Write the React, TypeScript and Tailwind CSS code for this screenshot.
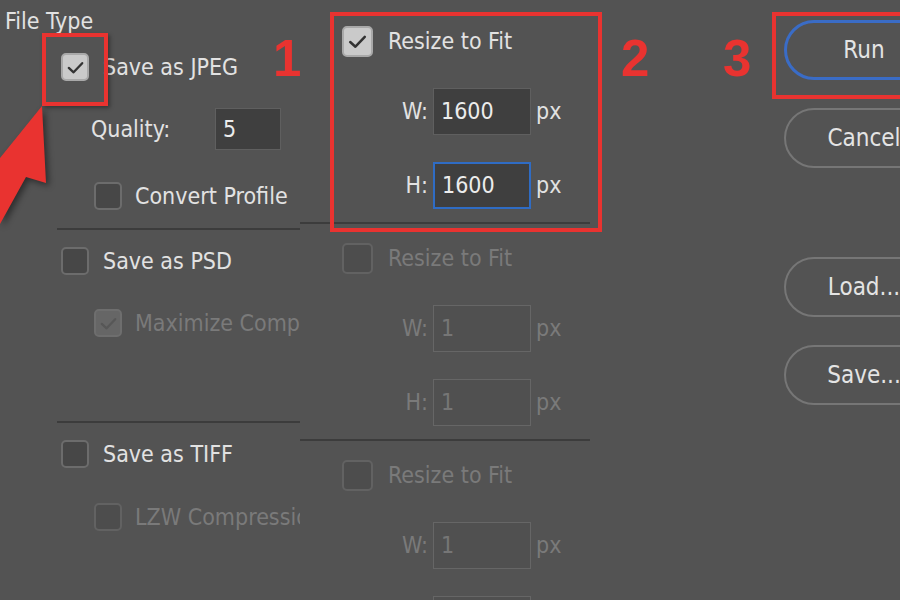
import React from 'react';

// Photoshop "Image Processor" dialog, zoomed, with red tutorial marks on top

const on = 'text-[#e2e2e2]';
const off = 'text-[#7a7a7a]';

const Box: React.FC<{ checked?: boolean; disabled?: boolean; big?: boolean }> = ({ checked, disabled, big }) => {
    const size = big ? 'w-[31px] h-[31px]' : 'w-[28px] h-[28px]';
    let look = 'bg-[#474747] border-[#6c6c6c]';
    if (checked && !disabled) look = 'bg-[#cacaca] border-[#a9a9a9]';
    if (checked && disabled) look = 'bg-[#666666] border-[#6e6e6e]';
    if (!checked && disabled) look = 'bg-[#4d4d4d] border-[#626262]';
    return (
        <div className={`${size} ${look} shrink-0 rounded-[5px] border-2 flex items-center justify-center`}>
            {checked && (
                <svg viewBox="0 0 24 24" className={big ? 'w-[25px] h-[25px]' : 'w-[23px] h-[23px]'}>
                    <polyline points="5,12.5 10,17 19,7.5" fill="none" stroke={disabled ? '#575757' : '#333333'} strokeWidth="2.4" strokeLinecap="round" strokeLinejoin="round" />
                </svg>
            )}
        </div>
    );
};

const Dim: React.FC<{ label: string; value: string; active: boolean; focus?: boolean; gap: string }> = ({ label, value, active, focus, gap }) => (
    <div className={`${gap} h-[47px] flex items-center`}>
        <span className={`w-[128px] text-right ${active ? on : off}`}>{label}</span>
        <div
            className={`ml-[5px] w-[98px] h-[47px] shrink-0 pl-[7px] flex items-center ${
                active ? 'bg-[#3f3f3f] text-[#ececec]' : 'bg-[#505050] text-[#767676]'
            } ${focus ? 'border-2 border-[#2f6cc4]' : active ? 'border border-[#5f5f5f]' : 'border border-[#666666]'}`}
        >
            {value}
        </div>
        <span className={`ml-[5px] ${active ? on : off}`}>px</span>
    </div>
);

const ResizeGroup: React.FC<{ active: boolean; w: string; h: string; focusH?: boolean }> = ({ active, w, h, focusH }) => (
    <div className="flex flex-col">
        <div className="mt-[9px] h-[50px] flex items-center pl-[42px] gap-[15px]">
            <Box checked={active} disabled={!active} big />
            <span className={active ? on : off}>Resize to Fit</span>
        </div>
        <Dim gap="mt-[22px]" label="W:" value={w} active={active} />
        <Dim gap="mt-[27px]" label="H:" value={h} active={active} focus={focusH} />
        <div className="mt-[13px] h-[2px] w-[290px] bg-[#3c3c3c]" />
    </div>
);

const Pill: React.FC<{ label: string; blue?: boolean; gap: string }> = ({ label, blue, gap }) => (
    <div
        className={`${gap} w-[160px] h-[60px] shrink-0 rounded-full flex items-center justify-center text-[24px] text-[#e4e4e4] ${
            blue ? 'border-[3px] border-[#3a6cc6]' : 'border-2 border-[#767676]'
        }`}
    >
        {label}
    </div>
);

export default function App() {
    return (
        <div className="relative w-[900px] h-[600px] overflow-hidden bg-[#535353] flex font-['DejaVu_Sans_Condensed','DejaVu_Sans',sans-serif] text-[23px] whitespace-nowrap">
            {/* left column: file types */}
            <div className="w-[300px] shrink-0 overflow-hidden flex flex-col">
                <div className={`h-[42px] flex items-center pl-[5px] ${on}`}>File Type</div>
                <div className="h-[50px] flex items-center pl-[61px] gap-[14px]">
                    <Box checked />
                    <span className={on}>Save as JPEG</span>
                </div>
                <div className="h-[74px] flex items-center pl-[91px]">
                    <span className={`w-[124px] ${on}`}>Quality:</span>
                    <div className="w-[66px] h-[42px] shrink-0 bg-[#3f3f3f] border border-[#5f5f5f] pl-[7px] flex items-center text-[#ececec]">5</div>
                </div>
                <div className="h-[60px] flex items-center pl-[94px] gap-[13px]">
                    <Box />
                    <span className={on}>Convert Profile</span>
                </div>
                <div className="mt-[2px] ml-[57px] h-[2px] bg-[#3c3c3c]" />
                <div className="h-[62px] flex items-center pl-[61px] gap-[14px]">
                    <Box />
                    <span className={on}>Save as PSD</span>
                </div>
                <div className="h-[62px] flex items-center pl-[94px] gap-[13px]">
                    <Box checked disabled />
                    <span className={off}>Maximize Compatibility</span>
                </div>
                <div className="mt-[67px] ml-[57px] h-[2px] bg-[#3c3c3c]" />
                <div className="h-[62px] flex items-center pl-[61px] gap-[14px]">
                    <Box />
                    <span className={on}>Save as TIFF</span>
                </div>
                <div className="h-[64px] flex items-center pl-[94px] gap-[13px]">
                    <Box disabled />
                    <span className={off}>LZW Compression</span>
                </div>
            </div>

            {/* middle column: resize options */}
            <div className="w-[300px] shrink-0 flex flex-col pt-[7px]">
                <ResizeGroup active w="1600" h="1600" focusH />
                <ResizeGroup active={false} w="1" h="1" />
                <ResizeGroup active={false} w="1" h="1" />
            </div>

            {/* right column: buttons */}
            <div className="w-[300px] shrink-0 flex flex-col pl-[184px] pt-[20px]">
                <Pill label="Run" blue gap="" />
                <Pill label="Cancel" gap="mt-[28px]" />
                <Pill label="Load..." gap="mt-[89px]" />
                <Pill label="Save..." gap="mt-[28px]" />
            </div>

            {/* tutorial marks */}
            <svg className="absolute left-0 top-[100px] w-[60px] h-[140px] drop-shadow-[3px_3px_3px_rgba(0,0,0,0.45)]" viewBox="0 0 60 140">
                <polygon points="42,6 46,83 26,77 0,124 0,58" fill="#e93330" />
            </svg>
            <div className="absolute left-[42px] top-[33px] w-[66px] h-[73px] border-4 border-[#e93330] shadow-[2px_2px_4px_rgba(0,0,0,0.35)]" />
            <div className="absolute left-[330px] top-[12px] w-[272px] h-[220px] border-4 border-[#e93330]" />
            <div className="absolute left-[772px] top-[12px] w-[140px] h-[87px] border-4 border-[#e93330]" />
            <span className="absolute left-[273px] top-[33px] text-[51px] leading-none font-bold text-[#e93330] font-['Liberation_Sans',sans-serif]">1</span>
            <span className="absolute left-[621px] top-[33px] text-[51px] leading-none font-bold text-[#e93330] font-['Liberation_Sans',sans-serif]">2</span>
            <span className="absolute left-[723px] top-[33px] text-[51px] leading-none font-bold text-[#e93330] font-['Liberation_Sans',sans-serif]">3</span>
        </div>
    );
}
